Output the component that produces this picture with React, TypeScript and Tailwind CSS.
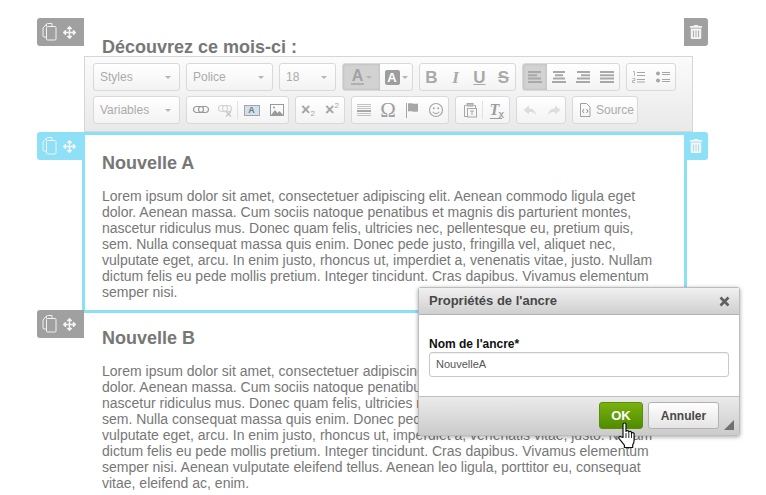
import React from "react";
import { FaArrowsAlt, FaTrashAlt } from "react-icons/fa";

const lorem =
  "Lorem ipsum dolor sit amet, consectetuer adipiscing elit. Aenean commodo ligula eget dolor. Aenean massa. Cum sociis natoque penatibus et magnis dis parturient montes, nascetur ridiculus mus. Donec quam felis, ultricies nec, pellentesque eu, pretium quis, sem. Nulla consequat massa quis enim. Donec pede justo, fringilla vel, aliquet nec, vulputate eget, arcu. In enim justo, rhoncus ut, imperdiet a, venenatis vitae, justo. Nullam dictum felis eu pede mollis pretium. Integer tincidunt. Cras dapibus. Vivamus elementum semper nisi.";

const G = "#a6a6a6";

function CopyIcon() {
  return (
    <svg width="15" height="18" viewBox="0 0 15 18" fill="none" stroke="#f1f1f1" strokeWidth="1">
      <path d="M4.5 3.5 V1.5 a1 1 0 0 1 1-1 H10 V3.5" />
      <path d="M4.5 1 L1 5 V13 a1 1 0 0 0 1 1 H4" />
      <path d="M5.5 3.5 H13 a1 1 0 0 1 1 1 V16 a1 1 0 0 1-1 1 H5.5 a1 1 0 0 1-1-1 V4.5 a1 1 0 0 1 1-1 Z" />
    </svg>
  );
}

function Handle({ color, className }: { color: string; className: string }) {
  return (
    <div className={`absolute w-[47px] h-[28px] rounded-l-[3px] flex items-center pl-[5px] gap-[6px] ${color} ${className}`}>
      <CopyIcon />
      <FaArrowsAlt size={13} color="#f4f4f4" />
    </div>
  );
}

function Trash({ color, className }: { color: string; className: string }) {
  return (
    <div className={`absolute w-[24px] h-[28px] rounded-r-[3px] flex items-center justify-center ${color} ${className}`}>
      <FaTrashAlt size={14} color="#f4f4f4" />
    </div>
  );
}

function Group({ children, w, className = "" }: { children: React.ReactNode; w: string; className?: string }) {
  return (
    <div className={`h-[28px] shrink-0 rounded-[3px] border border-[#d9d9d9] bg-gradient-to-b from-[#ffffff] to-[#f3f3f3] flex items-center overflow-hidden ${w} ${className}`}>
      {children}
    </div>
  );
}

function Combo({ label, w }: { label: string; w: string }) {
  return (
    <Group w={w} className="px-[6px] justify-between">
      <span className="text-[12px] text-[#ababab]">{label}</span>
      <span className="w-0 h-0 mr-[2px] border-x-[3px] border-x-transparent border-t-[3px] border-t-[#b5b5b5]" />
    </Group>
  );
}

function Btn({ children, w = "w-[24px]", active = false }: { children: React.ReactNode; w?: string; active?: boolean }) {
  return (
    <div className={`h-full flex items-center justify-center shrink-0 ${w} ${active ? "bg-[#d2d2d2] shadow-[inset_0_0_3px_#b5b5b5]" : ""}`}>
      {children}
    </div>
  );
}

const Sep = () => <div className="w-px h-[18px] bg-[#e2e2e2] shrink-0" />;
const Caret = () => <span className="ml-[2px] w-0 h-0 border-x-[3px] border-x-transparent border-t-[3px] border-t-[#b5b5b5]" />;

function Svg({ children, w = 16, h = 16 }: { children: React.ReactNode; w?: number; h?: number }) {
  return (
    <svg width={w} height={h} viewBox={`0 0 ${w} ${h}`} fill="none" stroke={G} strokeWidth="1">
      {children}
    </svg>
  );
}

function Lines({ rows }: { rows: [number, number][] }) {
  return (
    <Svg>
      {rows.map(([a, b], i) => (
        <path key={i} d={`M${a} ${3 + i * 3.3}H${b}`} strokeWidth="2" stroke="#a8a8a8" />
      ))}
    </Svg>
  );
}

const Glyph = ({ children, className = "" }: { children: React.ReactNode; className?: string }) => (
  <span className={`text-[17px] leading-none font-bold text-[#a9a9a9] ${className}`}>{children}</span>
);

function Toolbar() {
  return (
    <div className="absolute left-[2px] top-[38px] w-[609px] h-[76px] border border-[#d6d6d6] bg-gradient-to-b from-[#fbfbfb] to-[#e9e9e9] pl-[8px] pt-[6px] flex flex-col gap-[5px]">
      <div className="flex gap-[6px]">
        <Combo label="Styles" w="w-[87px]" />
        <Combo label="Police" w="w-[87px]" />
        <Combo label="18" w="w-[57px]" />
        <Group w="w-[71px]">
          <Btn w="w-[37px]" active>
            <span className="flex flex-col items-center">
              <span className="text-[16px] leading-[14px] font-bold text-[#a3a3a3]">A</span>
              <span className="w-[13px] h-[2px] bg-[#b0b0b0]" />
            </span>
            <Caret />
          </Btn>
          <Btn w="w-[32px]">
            <span className="w-[15px] h-[15px] rounded-[2px] bg-[#9d9d9d] text-white text-[13px] leading-[15px] font-bold text-center">A</span>
            <Caret />
          </Btn>
        </Group>
        <Group w="w-[97px]" className="justify-center">
          <Btn><Glyph>B</Glyph></Btn>
          <Btn><Glyph className="italic font-['Liberation_Serif']">I</Glyph></Btn>
          <Btn><Glyph className="underline text-[15px]">U</Glyph></Btn>
          <Btn><Glyph className="line-through">S</Glyph></Btn>
        </Group>
        <Group w="w-[98px]">
          <Btn active><Lines rows={[[1, 14], [1, 10], [1, 14], [1, 15]]} /></Btn>
          <Btn><Lines rows={[[2, 14], [4, 12], [2, 14], [1, 15]]} /></Btn>
          <Btn><Lines rows={[[2, 15], [6, 15], [2, 15], [1, 15]]} /></Btn>
          <Btn><Lines rows={[[1, 15], [1, 15], [1, 15], [1, 15]]} /></Btn>
        </Group>
        <Group w="w-[50px]">
          <Btn>
            <Svg>
              <path d="M2 2.5h1.5v4.5M1.5 9.5h2.5v2h-2.5v2h2.5" strokeWidth="0.8" />
              <path d="M6 3.5h8M6 6.5h8M6 10.5h8M6 13h8" />
            </Svg>
          </Btn>
          <Btn>
            <Svg>
              <circle cx="3" cy="4.5" r="2" fill={G} stroke="none" />
              <circle cx="3" cy="11.5" r="2" fill={G} stroke="none" />
              <path d="M7 3.5h8M7 5.5h8M7 10.5h8M7 12.5h8" />
            </Svg>
          </Btn>
        </Group>
      </div>
      <div className="flex gap-[6px]">
        <Combo label="Variables" w="w-[87px]" />
        <Group w="w-[103px]" className="pl-[2px]">
          <Btn>
            <Svg>
              <rect x="0.5" y="4.5" width="10" height="6" rx="3" stroke="#9a9a9a" strokeWidth="1.2" />
              <rect x="5.5" y="4.5" width="10" height="6" rx="3" stroke="#9a9a9a" strokeWidth="1.2" />
            </Svg>
          </Btn>
          <Btn>
            <Svg>
              <rect x="1.5" y="3.5" width="9" height="6" rx="3" stroke="#d4d4d4" strokeWidth="1.2" />
              <rect x="5.5" y="3.5" width="9" height="6" rx="3" stroke="#d4d4d4" strokeWidth="1.2" />
              <path d="M9 9.5l5 5M14 9.5l-5 5" stroke="#c4c4c4" strokeWidth="1.2" />
            </Svg>
          </Btn>
          <Sep />
          <Btn w="w-[27px]">
            <span className="w-[16px] h-[11px] bg-[#cfe0ee] border border-[#a4a4a4] text-[9px] leading-[9px] text-[#777] font-bold text-center">A</span>
          </Btn>
          <Btn>
            <Svg>
              <rect x="1.5" y="2.5" width="13" height="11" stroke="#9a9a9a" />
              <path d="M2 13l4-5 2.5 3 2-2 3.5 4z" fill="#9a9a9a" stroke="none" />
              <circle cx="5" cy="5.5" r="1" fill="#9a9a9a" stroke="none" />
            </Svg>
          </Btn>
        </Group>
        <Group w="w-[50px]">
          <Btn>
            <span className="flex items-end font-bold text-[#a5a5a5] text-[16px] leading-none">×<span className="text-[8px] font-normal">2</span></span>
          </Btn>
          <Btn>
            <span className="flex items-start font-bold text-[#a5a5a5] text-[16px] leading-none">×<span className="text-[8px] font-normal">2</span></span>
          </Btn>
        </Group>
        <Group w="w-[98px]">
          <Btn>
            <Svg>
              <path d="M1 2.5h14M1 4.5h14M1 6.5h14M1 11.5h14M1 13.5h14" stroke="#c2c2c2" />
              <path d="M1 9h14" strokeWidth="1.5" stroke="#8e8e8e" />
            </Svg>
          </Btn>
          <Btn><span className="text-[21px] leading-none text-[#9f9f9f] font-['Liberation_Serif']">Ω</span></Btn>
          <Btn>
            <Svg>
              <path d="M2.5 1v15" />
              <path d="M4 1.5c3-1 6 1 10 0v8c-4 1-7-1-10 0z" fill={G} stroke="none" />
            </Svg>
          </Btn>
          <Btn>
            <Svg>
              <circle cx="8" cy="8" r="6.5" strokeWidth="1.2" />
              <circle cx="5.8" cy="6.3" r="1" fill={G} stroke="none" />
              <circle cx="10.2" cy="6.3" r="1" fill={G} stroke="none" />
              <path d="M4.8 9.8c1.6 2.4 4.8 2.4 6.4 0" strokeWidth="1.1" />
            </Svg>
          </Btn>
        </Group>
        <Group w="w-[55px]" className="pl-[2px]">
          <Btn>
            <Svg>
              <path d="M4 3.5H2.5v11H5M12 3.5h1.5V6" />
              <rect x="5" y="1.5" width="6" height="2.5" fill="#c2c2c2" stroke="#a6a6a6" />
              <rect x="5.5" y="6.5" width="9" height="8.5" />
              <path d="M8 9h4M10 9v4" />
            </Svg>
          </Btn>
          <Sep />
          <Btn w="w-[26px]">
            <span className="relative text-[16px] leading-none font-bold italic text-[#9c9c9c] font-['Liberation_Serif'] border-b border-[#9c9c9c] pr-[3px]">T
              <span className="absolute left-[9px] top-[8px] not-italic font-['Liberation_Sans'] text-[10px] text-[#a6a6a6]">x</span>
            </span>
          </Btn>
        </Group>
        <Group w="w-[50px]" className="pl-[1px]">
          <Btn>
            <Svg><path d="M7 3.5L1.5 8l5.5 4.5V10c3 0 5 .5 7 3-.5-4-3-6.5-7-6.5z" fill="#dddddd" stroke="none" /></Svg>
          </Btn>
          <Btn>
            <Svg><path d="M9 3.5L14.5 8 9 12.5V10c-3 0-5 .5-7 3 .5-4 3-6.5 7-6.5z" fill="#dddddd" stroke="none" /></Svg>
          </Btn>
        </Group>
        <Group w="w-[66px]" className="pl-[6px] gap-[5px]">
          <Svg w={12} h={16}>
            <path d="M1.5 1.5h6l3.5 3.5v9.5h-9.5z" stroke="#a0a0a0" />
            <path d="M5 7L3.5 9 5 11M7.5 7L9 9 7.5 11" stroke="#8c8c8c" />
          </Svg>
          <span className="text-[12px] text-[#ababab]">Source</span>
        </Group>
      </div>
    </div>
  );
}

function HandCursor() {
  return (
    <svg className="absolute left-[198px] top-[25px]" width="22" height="27" viewBox="0 0 22 27">
      <path
        d="M6 2.2c0-1.6 3-1.6 3 0v7.3c0-1.3 2.8-1.3 2.8.2v.6c0-1.3 2.7-1.2 2.7.3v.8c0-1.2 2.6-1.1 2.6.4v6.7c0 2-.6 3-1.4 4.4v2.6H7.4v-2.4c-1.6-1.7-3.2-4-5.3-6.5-1.2-1.6.7-3 2.2-1.6L6 15.5z"
        fill="#ffffff"
        stroke="#111111"
        strokeWidth="1.2"
        strokeLinejoin="round"
      />
      <path d="M9 11v5M11.8 11v5M14.5 12v4" stroke="#111111" strokeWidth="0.9" />
    </svg>
  );
}

function Dialog() {
  return (
    <div className="absolute left-[418px] top-[287px] w-[322px] h-[149px] rounded-[3px] border border-[#bcbcbc] bg-white shadow-[0_1px_4px_rgba(0,0,0,0.35)] flex flex-col text-[#222]">
      <div className="h-[27px] shrink-0 border-b border-[#b2b2b2] bg-gradient-to-b from-[#f1f1f1] to-[#cfcfcf] flex items-center justify-between pl-[10px] pr-[9px]">
        <span className="text-[13px] font-bold text-[#474747]">Propriétés de l'ancre</span>
        <svg width="11" height="11" viewBox="0 0 11 11">
          <path d="M1.5 1.5l8 8M9.5 1.5l-8 8" stroke="#5f5f5f" strokeWidth="2.6" />
        </svg>
      </div>
      <div className="flex-1 px-[10px] pt-[22px]">
        <div className="text-[12px] leading-[14px] font-bold text-[#111]">Nom de l'ancre*</div>
        <div className="mt-[1px] h-[25px] rounded-[3px] border border-[#c9c9c9] shadow-[inset_0_1px_1px_rgba(0,0,0,0.06)] flex items-center pl-[6px] text-[11px] text-[#555]">NouvelleA</div>
      </div>
      <div className="relative h-[39px] shrink-0 border-t border-[#bfbfbf] bg-gradient-to-b from-[#ebebeb] to-[#cbcbcb] flex justify-end items-start pt-[5px] pr-[20px] gap-[5px]">
        <div className="w-[44px] h-[27px] rounded-[3px] border border-[#5b8d0a] bg-gradient-to-b from-[#79b10f] to-[#4f8d00] flex items-center justify-center text-[13px] font-bold text-white">OK</div>
        <div className="w-[71px] h-[27px] rounded-[3px] border border-[#b2b2b2] bg-gradient-to-b from-[#ffffff] to-[#e4e4e4] flex items-center justify-center text-[12px] font-bold text-[#474747]">Annuler</div>
        <svg className="absolute right-[5px] bottom-[5px]" width="10" height="10" viewBox="0 0 10 10">
          <path d="M10 0V10H0z" fill="#707070" />
        </svg>
        <HandCursor />
      </div>
    </div>
  );
}

function Content({ title, text }: { title: string; text: string }) {
  return (
    <>
      <h2 className="text-[18px] leading-[20px] font-bold text-[#777777]">{title}</h2>
      <p className="mt-[15px] text-[14px] leading-[16px] text-[#777777] w-[556px]">{text}</p>
    </>
  );
}

export default function App() {
  return (
    <div className="relative w-[766px] h-[495px] overflow-hidden bg-white pt-[18px] font-['Liberation_Sans',Arial,sans-serif]">
      <section className="relative ml-[82px] w-[605px] h-[114px] px-[20px] pt-[19px]">
        <Handle color="bg-[#a0a0a0]" className="-left-[45px] top-0" />
        <Trash color="bg-[#a0a0a0]" className="left-[602px] top-0" />
        <h2 className="text-[18px] leading-[20px] font-bold text-[#777777]">Découvrez ce mois-ci :</h2>
        <Toolbar />
      </section>
      <section className="relative ml-[82px] w-[605px] h-[181px] border-[3px] border-[#8ae0f4] px-[17px] pt-[18px]">
        <Handle color="bg-[#8ee0f6]" className="-left-[48px] -top-[3px]" />
        <Trash color="bg-[#8ee0f6]" className="left-[599px] -top-[3px]" />
        <Content title="Nouvelle A" text={lorem} />
      </section>
      <section className="relative ml-[82px] w-[605px] px-[20px] pt-[15px]">
        <Handle color="bg-[#a0a0a0]" className="-left-[45px] -top-[3px]" />
        <Content title="Nouvelle B" text={lorem + " Aenean vulputate eleifend tellus. Aenean leo ligula, porttitor eu, consequat vitae, eleifend ac, enim."} />
      </section>
      <Dialog />
    </div>
  );
}
